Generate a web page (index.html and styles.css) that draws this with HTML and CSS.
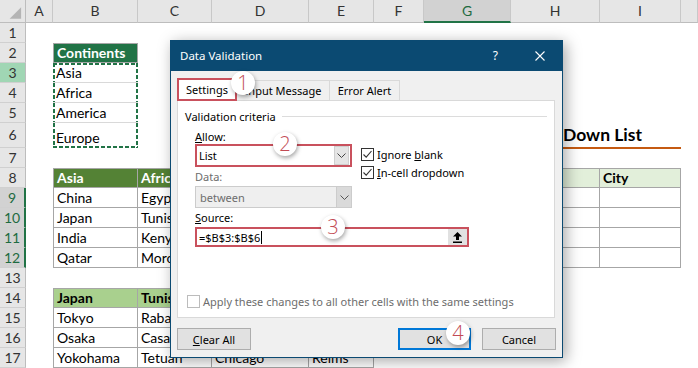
FILE: index.html
```html
<!DOCTYPE html>
<html>
<head>
    <meta charset="UTF-8">
    <title>Data Validation</title>
    <link rel="stylesheet" href="styles.css">
</head>
<body>
<div class="sheet">
    <div class="corner"><svg width="26" height="23" viewBox="0 0 26 23"><path d="M22 8V20H10Z" fill="#b4b4b4"/></svg></div><div class="ch">A</div><div class="ch">B</div><div class="ch">C</div><div class="ch">D</div><div class="ch">E</div><div class="ch">F</div><div class="ch sel">G</div><div class="ch">H</div><div class="ch">I</div><div class="ch"></div>

    <div class="rh">1</div><div></div><div></div><div></div><div></div><div></div><div></div><div></div><div></div><div></div><div></div>
    <div class="rh">2</div><div></div><div class="t tl tt h1">Continents</div><div></div><div></div><div></div><div></div><div></div><div></div><div></div><div></div>
    <div class="rh act">3</div><div></div><div class="ants top">Asia</div><div></div><div></div><div></div><div></div><div></div><div></div><div></div><div></div>
    <div class="rh">4</div><div></div><div class="ants">Africa</div><div></div><div></div><div></div><div></div><div></div><div></div><div></div><div></div>
    <div class="rh">5</div><div></div><div class="ants">America</div><div></div><div></div><div></div><div></div><div></div><div></div><div></div><div></div>
    <div class="rh">6</div><div></div><div class="ants bot">Europe</div><div></div><div></div><div></div><div></div><div class="title">Dependent Drop Down List</div><div></div>
    <div class="rh">7</div><div></div><div></div><div></div><div></div><div></div><div></div><div></div><div></div><div></div><div></div>

    <div class="rh">8</div><div></div><div class="t tl tt h2">Asia</div><div class="t tt h2">Africa</div><div class="t tt h2">America</div><div class="t tt h2">Europe</div><div></div><div class="t tl tt h4">Continent</div><div class="t tt h4"></div><div class="t tt h4">City</div><div></div>
    <div class="rh sel">9</div><div></div><div class="t tl">China</div><div class="t">Egypt</div><div class="t">USA</div><div class="t">France</div><div></div><div class="t tl"></div><div class="t"></div><div class="t"></div><div></div>
    <div class="rh sel">10</div><div></div><div class="t tl">Japan</div><div class="t">Tunisia</div><div class="t">Canada</div><div class="t">Germany</div><div></div><div class="t tl"></div><div class="t"></div><div class="t"></div><div></div>
    <div class="rh sel">11</div><div></div><div class="t tl">India</div><div class="t">Kenya</div><div class="t">Brazil</div><div class="t">Italy</div><div></div><div class="t tl"></div><div class="t"></div><div class="t"></div><div></div>
    <div class="rh sel">12</div><div></div><div class="t tl">Qatar</div><div class="t">Morocco</div><div class="t">Mexico</div><div class="t">Spain</div><div></div><div class="t tl"></div><div class="t"></div><div class="t"></div><div></div>
    <div class="rh">13</div><div></div><div></div><div></div><div></div><div></div><div></div><div></div><div></div><div></div><div></div>

    <div class="rh">14</div><div></div><div class="t tl tt h3">Japan</div><div class="t tt h3">Tunisia</div><div class="t tt h3">USA</div><div class="t tt h3">France</div><div></div><div></div><div></div><div></div><div></div>
    <div class="rh">15</div><div></div><div class="t tl">Tokyo</div><div class="t">Rabat</div><div class="t">New York</div><div class="t">Paris</div><div></div><div></div><div></div><div></div><div></div>
    <div class="rh">16</div><div></div><div class="t tl">Osaka</div><div class="t">Casablanca</div><div class="t">Los Angeles</div><div class="t">Lyon</div><div></div><div></div><div></div><div></div><div></div>
    <div class="rh">17</div><div></div><div class="t tl">Yokohama</div><div class="t">Tetuan</div><div class="t">Chicago</div><div class="t">Reims</div><div></div><div></div><div></div><div></div><div></div>
</div>

<div class="dialog">
    <div class="titlebar">
        <span class="dtitle">Data Validation</span>
        <span class="help">?</span>
        <svg class="close" width="10" height="10" viewBox="0 0 10 10"><path d="M0.5 0.5L9.5 9.5M9.5 0.5L0.5 9.5" stroke="#fff" stroke-width="1.1"/></svg>
    </div>

    <div class="tabs">
        <div class="tab on">Settings</div>
        <div class="tab input">Input Message</div>
        <div class="tab error">Error Alert</div>
    </div>

    <div class="panel">
        <div class="legend">Validation criteria</div>
        <div class="fields">
            <div class="col">
                <div class="lbl"><u>A</u>llow:</div>
                <div class="combo hl"><span>List</span><b class="drop"><svg width="9" height="5" viewBox="0 0 9 5"><path d="M0.5 0.5L4.5 4.5L8.5 0.5" fill="none" stroke="#444"/></svg></b></div>
                <div class="lbl dim mid">Data:</div>
                <div class="combo off"><span>between</span><b class="drop"><svg width="9" height="5" viewBox="0 0 9 5"><path d="M0.5 0.5L4.5 4.5L8.5 0.5" fill="none" stroke="#555"/></svg></b></div>
            </div>
            <div class="checks">
                <div class="chk"><span class="box"><svg width="11" height="11" viewBox="0 0 11 11"><path d="M1.5 5.5L4.2 8.2L9.5 2" fill="none" stroke="#333" stroke-width="1.1"/></svg></span><span>Ignore <u>b</u>lank</span></div>
                <div class="chk"><span class="box"><svg width="11" height="11" viewBox="0 0 11 11"><path d="M1.5 5.5L4.2 8.2L9.5 2" fill="none" stroke="#333" stroke-width="1.1"/></svg></span><span><u>I</u>n-cell dropdown</span></div>
            </div>
        </div>
        <div class="lbl src"><u>S</u>ource:</div>
        <div class="source"><span>=$B$3:$B$6</span><i class="caret"></i><b class="pick"><svg width="9" height="11" viewBox="0 0 9 11"><path d="M4.5 0L9 4.5H6V8H3V4.5H0Z" fill="#000"/><rect x="0" y="9.5" width="9" height="1.5" fill="#000"/></svg></b></div>
        <div class="apply"><span class="box dis"></span><span>Apply these changes to all other cells with the same settings</span></div>
    </div>

    <div class="buttons">
        <div class="btn"><span><u>C</u>lear All</span></div>
        <div class="btn ok">OK</div>
        <div class="btn cancel">Cancel</div>
    </div>

    <span class="badge b1">1</span>
    <span class="badge b2">2</span>
    <span class="badge b3">3</span>
    <span class="badge b4">4</span>
</div>
</body>
</html>
```

FILE: styles.css
```css
body {
    margin: 0;
    width: 698px;
    height: 368px;
    overflow: hidden;
    position: relative;
    background: #fff;
    font-family: Lato, "Liberation Sans", sans-serif;
}

/* worksheet */
.sheet {
    display: grid;
    grid-template-columns: 26px 27px 85px 74px 97px 65px 50px 87px 89px 81px 17px;
    grid-template-rows: 23px repeat(5, 20px) 25px repeat(11, 20px);
    font-size: 14px;
    color: #000;
}

.sheet > div {
    display: flex;
    align-items: flex-end;
    box-sizing: border-box;
    padding: 0 0 0 3px;
    line-height: 18px;
    white-space: nowrap;
    overflow: hidden;
}

.sheet > .corner {
    padding: 0;
    background: #e6e6e6;
    border-right: 1px solid #bdbdbd;
    border-bottom: 1px solid #bdbdbd;
}

.sheet > .ch, .sheet > .rh {
    justify-content: center;
    align-items: center;
    padding: 0;
    background: #e6e6e6;
    color: #333;
}

.sheet > .ch {
    border-right: 1px solid #c8c8c8;
    border-bottom: 1px solid #bdbdbd;
}

.sheet > .ch.sel {
    background: #d2d2d2;
    color: #1e6b41;
    border-bottom: 2px solid #217346;
}

.sheet > .rh {
    border-right: 1px solid #bdbdbd;
    border-bottom: 1px solid #d0d0d0;
}

.sheet > .rh.act {
    background: #a0d6b4;
}

.sheet > .rh.sel {
    background: #d2d2d2;
    color: #1e6b41;
    border-right: 2px solid #217346;
}

.t { border-right: 1px solid #a6a6a6; border-bottom: 1px solid #a6a6a6; }
.tl { border-left: 1px solid #a6a6a6; }
.tt { border-top: 1px solid #a6a6a6; }

.h1 { background: #217346; color: #fff; font-weight: bold; }
.h2 { background: #548235; color: #fff; font-weight: bold; }
.h3 { background: #a9d08e; font-weight: bold; }
.h4 { background: #e2efda; font-weight: bold; }

/* copy marquee around B3:B6 */
.ants {
    border-bottom: 1px solid #d9d9d9;
    background:
        repeating-linear-gradient(#217346 0 4px, transparent 4px 6px) left top / 2px 100% no-repeat,
        repeating-linear-gradient(#217346 0 4px, transparent 4px 6px) right top / 2px 100% no-repeat;
}

.ants.top {
    background:
        repeating-linear-gradient(90deg, #217346 0 4px, transparent 4px 6px) left top / 100% 2px no-repeat,
        repeating-linear-gradient(#217346 0 4px, transparent 4px 6px) left top / 2px 100% no-repeat,
        repeating-linear-gradient(#217346 0 4px, transparent 4px 6px) right top / 2px 100% no-repeat;
}

.ants.bot {
    border-bottom: none;
    padding-bottom: 1px;
    background:
        repeating-linear-gradient(90deg, #217346 0 4px, transparent 4px 6px) left bottom / 100% 2px no-repeat,
        repeating-linear-gradient(#217346 0 4px, transparent 4px 6px) left top / 2px 100% no-repeat,
        repeating-linear-gradient(#217346 0 4px, transparent 4px 6px) right top / 2px 100% no-repeat;
}

.sheet > .title {
    grid-column: span 3;
    justify-content: flex-end;
    padding: 0 39px 3px 0;
    font-size: 17.5px;
    font-weight: bold;
    border-bottom: 1px solid #c55a11;
    box-shadow: 0 1px 0 #c55a11;
}

/* dialog */
.dialog {
    position: absolute;
    left: 170px;
    top: 40px;
    width: 393px;
    height: 318px;
    box-sizing: border-box;
    display: flex;
    flex-direction: column;
    background: #f0f0f0;
    border: 1px solid #0b4a72;
    border-top: none;
    box-shadow: 3px 3px 14px rgba(0, 0, 0, 0.35);
    font-family: "Noto Sans", "Open Sans", sans-serif;
    font-size: 11px;
    color: #000;
}

.titlebar {
    height: 31px;
    display: flex;
    align-items: center;
    padding-left: 9px;
    background: #0b4a72;
    color: #fff;
}

.dtitle {
    flex: 1;
    font-size: 11.5px;
}

.help {
    margin-right: 37px;
    font-size: 12px;
}

.close { margin-right: 17px; }

.tabs {
    display: flex;
    align-items: flex-end;
    height: 22px;
    margin: 7px 0 0 6px;
    position: relative;
    z-index: 1;
}

.tab {
    height: 20px;
    box-sizing: border-box;
    display: flex;
    align-items: center;
    justify-content: center;
    border: 1px solid #d9d9d9;
    border-bottom: none;
    background: #f0f0f0;
}

.tab.on {
    width: 60px;
    height: 23px;
    margin-bottom: -1px;
    background: #fff;
    border: 2px solid #c9515d;
}

.tab.input { width: 93px; border-left: none; }
.tab.error { width: 70px; border-left: none; }

.panel {
    width: 378px;
    height: 218px;
    margin-left: 6px;
    box-sizing: border-box;
    display: flex;
    flex-direction: column;
    padding-top: 7px;
    border: 1px solid #d9d9d9;
    background: #fff;
}

.legend {
    display: flex;
    align-items: center;
    height: 16px;
    padding-left: 7px;
}

.legend::after {
    content: "";
    flex: 1;
    height: 1px;
    margin: 0 7px 0 6px;
    background: #dcdcdc;
}

.fields {
    display: flex;
    margin-top: 5px;
    padding-left: 17px;
}

.col { width: 157px; }

.lbl {
    height: 15px;
    line-height: 15px;
}

.lbl.mid, .lbl.src {
    height: 19px;
    line-height: 19px;
}

.lbl.src { margin-left: 17px; }

.dim { color: #6d6d6d; }

.combo {
    height: 23px;
    box-sizing: border-box;
    display: flex;
    align-items: center;
    padding-left: 2px;
    border: 2px solid #c9515d;
    background: #fff;
}

.combo.off {
    height: 22px;
    padding-left: 4px;
    border: 1px solid #cccccc;
    background: #efefef;
    color: #6d6d6d;
}

.drop {
    width: 15px;
    height: 19px;
    margin: 0 1px 0 auto;
    box-sizing: border-box;
    display: flex;
    align-items: center;
    justify-content: center;
    background: #e5e5e5;
    border: 1px solid #cfcfcf;
}

.combo.off .drop {
    height: 20px;
    margin-right: 0;
    background: #dadada;
    border: none;
    border-left: 1px solid #cccccc;
}

.checks { margin: 16px 0 0 9px; }

.chk {
    display: flex;
    align-items: center;
    height: 18px;
}

.box {
    width: 13px;
    height: 13px;
    margin-right: 3px;
    box-sizing: border-box;
    display: flex;
    align-items: center;
    justify-content: center;
    border: 1px solid #333;
    background: #fff;
}

.box.dis { border-color: #bcbcbc; }

.source {
    width: 274px;
    height: 20px;
    margin-left: 17px;
    box-sizing: border-box;
    display: flex;
    align-items: center;
    padding-left: 2px;
    border: 2px solid #c9515d;
}

.caret {
    width: 1px;
    height: 13px;
    margin-left: 1px;
    background: #000;
}

.pick {
    width: 19px;
    height: 16px;
    margin-left: auto;
    display: flex;
    align-items: center;
    justify-content: center;
    background: #e1e1e1;
}

.apply {
    display: flex;
    align-items: center;
    height: 16px;
    margin: auto 0 8px 0;
    padding-left: 9px;
    color: #6d6d6d;
}

.buttons {
    display: flex;
    height: 22px;
    margin: 10px 6px 0 6px;
}

.btn {
    width: 74px;
    box-sizing: border-box;
    display: flex;
    align-items: center;
    justify-content: center;
    border: 1px solid #adadad;
    background: #e1e1e1;
}

.btn.ok {
    width: 73px;
    margin-left: auto;
    border: 2px solid #0078d7;
}

.btn.cancel { margin-left: 11px; }

/* numbered callouts */
.badge {
    position: absolute;
    z-index: 2;
    width: 24px;
    height: 24px;
    border-radius: 50%;
    display: flex;
    align-items: center;
    justify-content: center;
    background: #fff;
    box-shadow: 1px 2px 4px rgba(0, 0, 0, 0.35);
    color: #c24b55;
    font-family: "Open Sans", sans-serif;
    font-weight: 300;
    font-size: 20px;
    line-height: 1;
}

.b1 { left: 60px; top: 31px; }
.b2 { left: 102px; top: 92px; }
.b3 { left: 150px; top: 175px; }
.b4 { left: 275px; top: 281px; }
```
